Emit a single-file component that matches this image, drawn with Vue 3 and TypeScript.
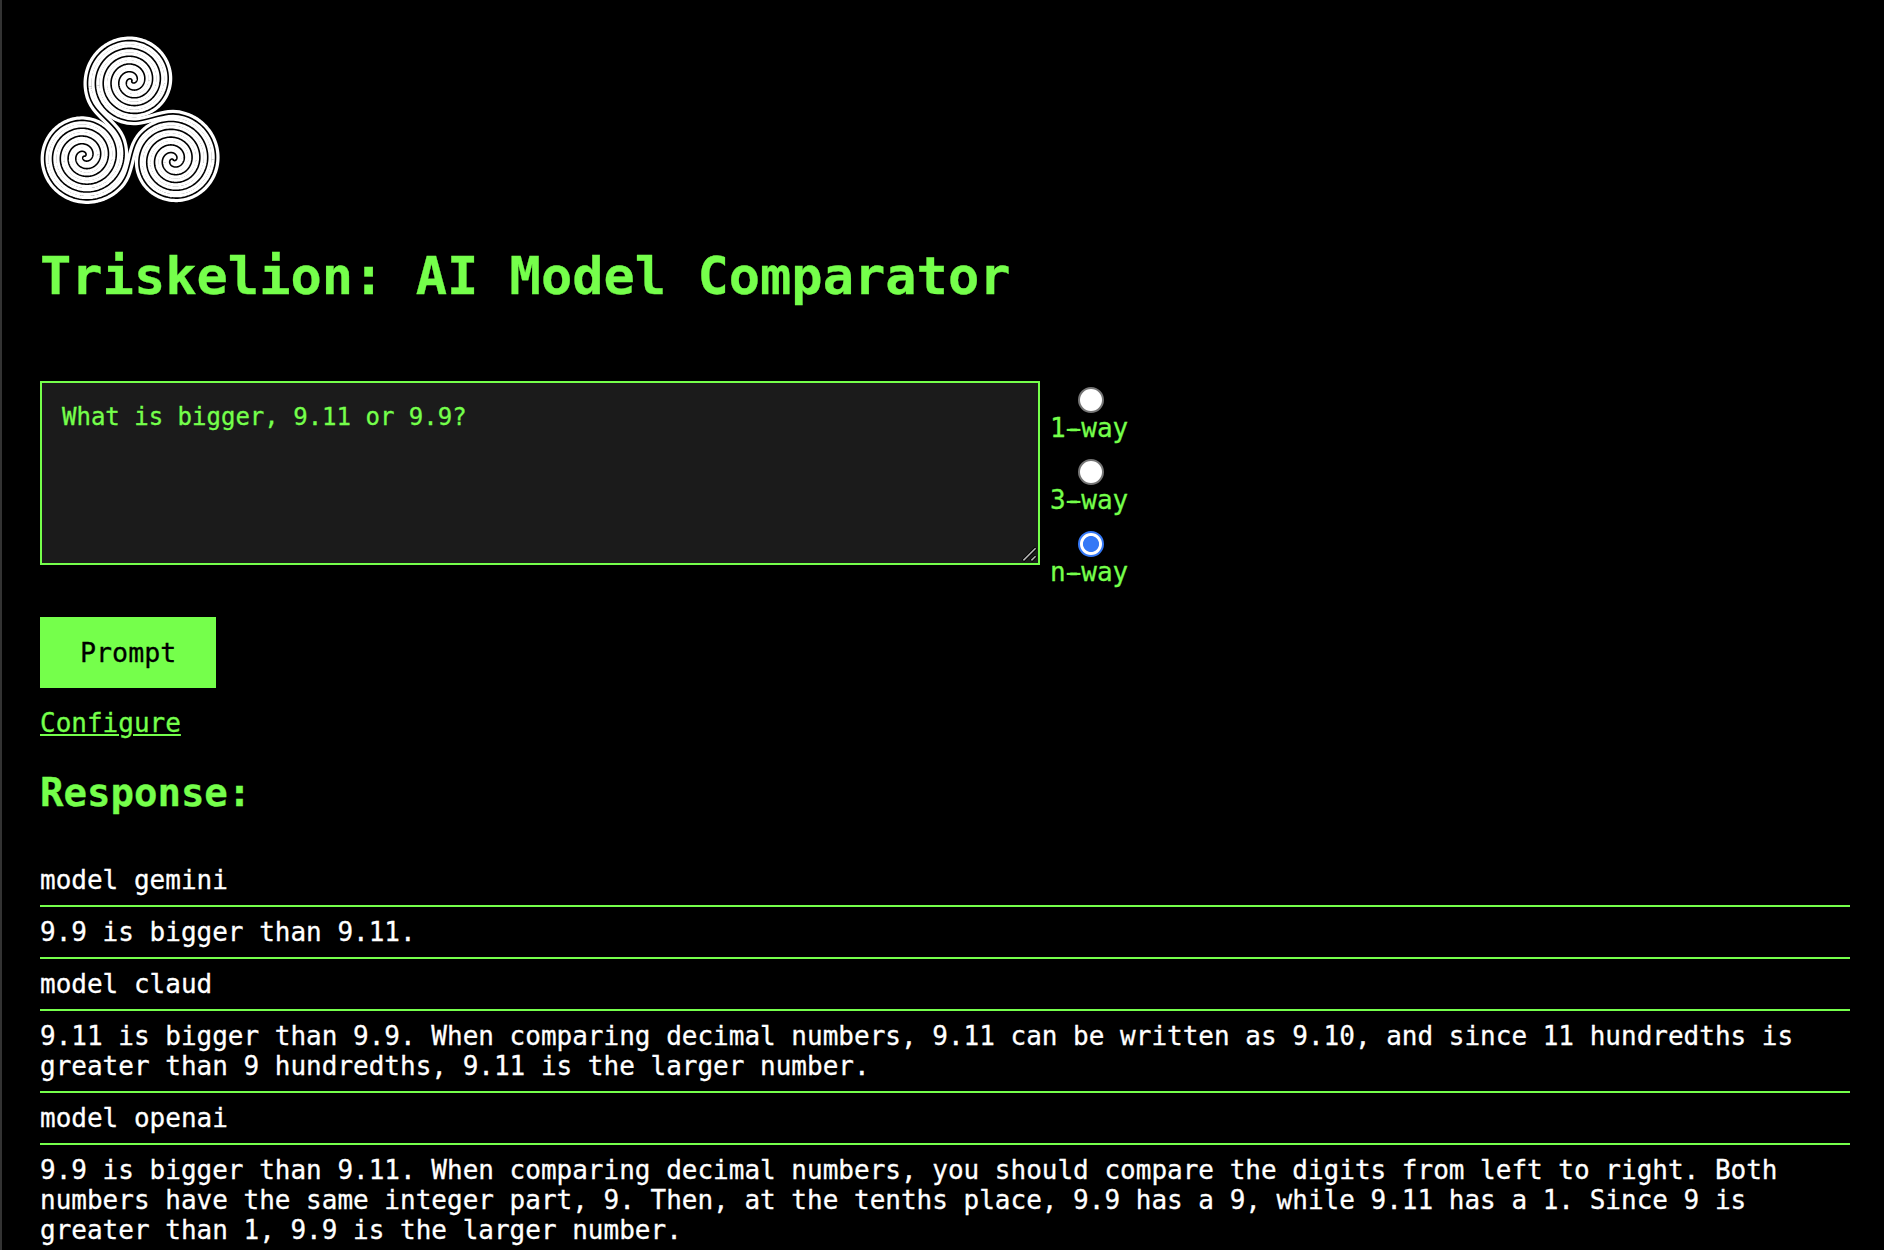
<script setup lang="ts">
import { ref } from 'vue'

interface Disc {
  x: number
  y: number
  // math-style angle (degrees, counter-clockwise) and the line radius there
  angle: number
  radius: number
}

interface Point {
  x: number
  y: number
}

// radial growth per radian
const GROWTH = 2.5
const MARGIN = 42

const top: Disc = { x: 131.8, y: 80.9, angle: 180, radius: 44.2 }
const left: Disc = { x: 84.4, y: 156.2, angle: 270, radius: 43.6 }
const right: Disc = { x: 173.3, y: 159.8, angle: 90, radius: 46.1 }

const rad = (deg: number) => (deg * Math.PI) / 180

function arm(disc: Disc, target: Disc, halfTurns: number): Point[] {
  const reference = disc.angle + halfTurns * 180
  let direction = (Math.atan2(disc.y - target.y, target.x - disc.x) * 180) / Math.PI
  while (reference - direction > 180) direction += 360
  const end = rad(direction - MARGIN)
  const start = rad(reference) - disc.radius / GROWTH
  const points: Point[] = []
  const steps = 360
  for (let i = 0; i <= steps; i++) {
    const t = start + ((end - start) * i) / steps
    const r = GROWTH * (t - start)
    points.push({ x: disc.x + r * Math.cos(t), y: disc.y - r * Math.sin(t) })
  }
  return points
}

function link(a: Point[], b: Point[]): string {
  const f = (p: Point) => `${p.x.toFixed(2)} ${p.y.toFixed(2)}`
  const ahead = (pts: Point[], length: number): Point => {
    const p = pts[pts.length - 1]
    const q = pts[pts.length - 2]
    const d = Math.hypot(p.x - q.x, p.y - q.y)
    return { x: p.x + ((p.x - q.x) / d) * length, y: p.y + ((p.y - q.y) / d) * length }
  }
  const p = a[a.length - 1]
  const q = b[b.length - 1]
  const reach = Math.hypot(p.x - q.x, p.y - q.y) * 0.38
  return (
    'M' + a.map(f).join('L') +
    'C' + f(ahead(a, reach)) + ',' + f(ahead(b, reach)) + ',' + f(q) +
    'L' + [...b].reverse().map(f).join('L')
  )
}

const spirals: string[] = [
  link(arm(top, left, 0), arm(left, top, 1)),
  link(arm(top, right, 1), arm(right, top, 0)),
  link(arm(left, right, 0), arm(right, left, 1)),
]

const prompt = ref('What is bigger, 9.11 or 9.9?')
const mode = ref('n')
const modes = ['1', '3', 'n']

const rows: string[] = [
  'model gemini',
  '9.9 is bigger than 9.11.',
  'model claud',
  '9.11 is bigger than 9.9. When comparing decimal numbers, 9.11 can be written as 9.10, and since 11 hundredths is greater than 9 hundredths, 9.11 is the larger number.',
  'model openai',
  '9.9 is bigger than 9.11. When comparing decimal numbers, you should compare the digits from left to right. Both numbers have the same integer part, 9. Then, at the tenths place, 9.9 has a 9, while 9.11 has a 1. Since 9 is greater than 1, 9.9 is the larger number.',
]
</script>

<template>
  <main class="page">
    <svg class="logo" viewBox="40 32 180 180" aria-hidden="true">
      <g fill="none" stroke-linejoin="round" stroke-linecap="round">
        <path v-for="(d, i) in spirals" :key="'w' + i" :d="d" stroke="#fff" stroke-width="8.1" />
        <path v-for="(d, i) in spirals" :key="'b' + i" :d="d" stroke="#000" stroke-width="1.6" />
      </g>
    </svg>
    <h1>Triskelion: AI Model Comparator</h1>
    <form class="form" @submit.prevent>
      <div class="fields">
        <div class="box">
          <textarea v-model="prompt" spellcheck="false"></textarea>
          <svg class="grip" viewBox="0 0 16 16" aria-hidden="true">
            <path d="M2 15L15 2M10 15L15 10" stroke="#000" stroke-width="3.4" />
            <path d="M2.4 14.4L14.6 2.2M10.4 14.4L14.6 10.2" stroke="#b4b4b4" stroke-width="1.5" />
          </svg>
        </div>
        <div class="modes">
          <label v-for="m in modes" :key="m" class="mode">
            <input v-model="mode" type="radio" name="mode" :value="m" />
            <span>{{ m }}<span class="dash">-</span>way</span>
          </label>
        </div>
      </div>
      <button type="submit">Prompt</button>
    </form>
    <a class="configure" href="#">Configure</a>
    <h2>Response:</h2>
    <div class="rows">
      <div v-for="(row, i) in rows" :key="i" class="row">{{ row }}</div>
    </div>
  </main>
</template>

<style>
body {
  margin: 0;
  background: #000;
  overflow: hidden;
}
</style>

<style scoped>
.page {
  box-sizing: border-box;
  height: 1250px;
  overflow: hidden;
  padding: 32px 34px 0 38px;
  border-left: 2px solid #333;
  background: #000;
  color: #75ff4b;
  font: 26px/30px 'DejaVu Sans Mono', monospace;
  -webkit-text-stroke: 0.3px currentColor;
}

.logo {
  display: block;
  width: 180px;
  height: 180px;
}

h1 {
  margin: 34px 0 75px;
  font-size: 52px;
  line-height: 60px;
}

.fields {
  display: flex;
  height: 236px;
}

.box {
  position: relative;
  width: 1000px;
  height: 184px;
}

textarea {
  display: block;
  box-sizing: border-box;
  width: 100%;
  height: 100%;
  padding: 20px;
  border: 2px solid #75ff4b;
  border-radius: 0;
  outline: none;
  background: #1b1b1b;
  color: #75ff4b;
  font: 24px/28px 'DejaVu Sans Mono', monospace;
  resize: none;
}

.grip {
  position: absolute;
  right: 3px;
  bottom: 3px;
  width: 16px;
  height: 16px;
}

.modes {
  display: flex;
  flex-direction: column;
  gap: 16px;
  margin-left: 10px;
  padding-top: 6px;
}

.mode {
  display: flex;
  flex-direction: column;
}

.mode input {
  appearance: none;
  box-sizing: border-box;
  width: 26px;
  height: 26px;
  margin: 0 0 0 28px;
  border: 2px solid #757575;
  border-radius: 50%;
  background: #fff;
}

.mode input:checked {
  border-color: #3478f6;
  background: radial-gradient(circle, #3478f6 7.6px, #fff 8.4px);
}

/* widens the hyphen to the full cell */
.dash {
  text-shadow: -3.5px 0 currentColor, 3.5px 0 currentColor;
}

button {
  display: block;
  height: 71px;
  padding: 0 40px;
  border: 0;
  background: #75ff4b;
  color: #000;
  font: 26.667px/31px 'DejaVu Sans Mono', monospace;
}

.configure {
  display: block;
  width: max-content;
  margin-top: 20px;
  color: inherit;
  text-decoration-thickness: 2px;
  text-underline-offset: 2px;
}

h2 {
  margin: 32px 0 40px;
  font-size: 39px;
  line-height: 45px;
}

.row {
  padding: 10px 0;
  border-bottom: 2px solid #75ff4b;
  color: #fff;
}
</style>
